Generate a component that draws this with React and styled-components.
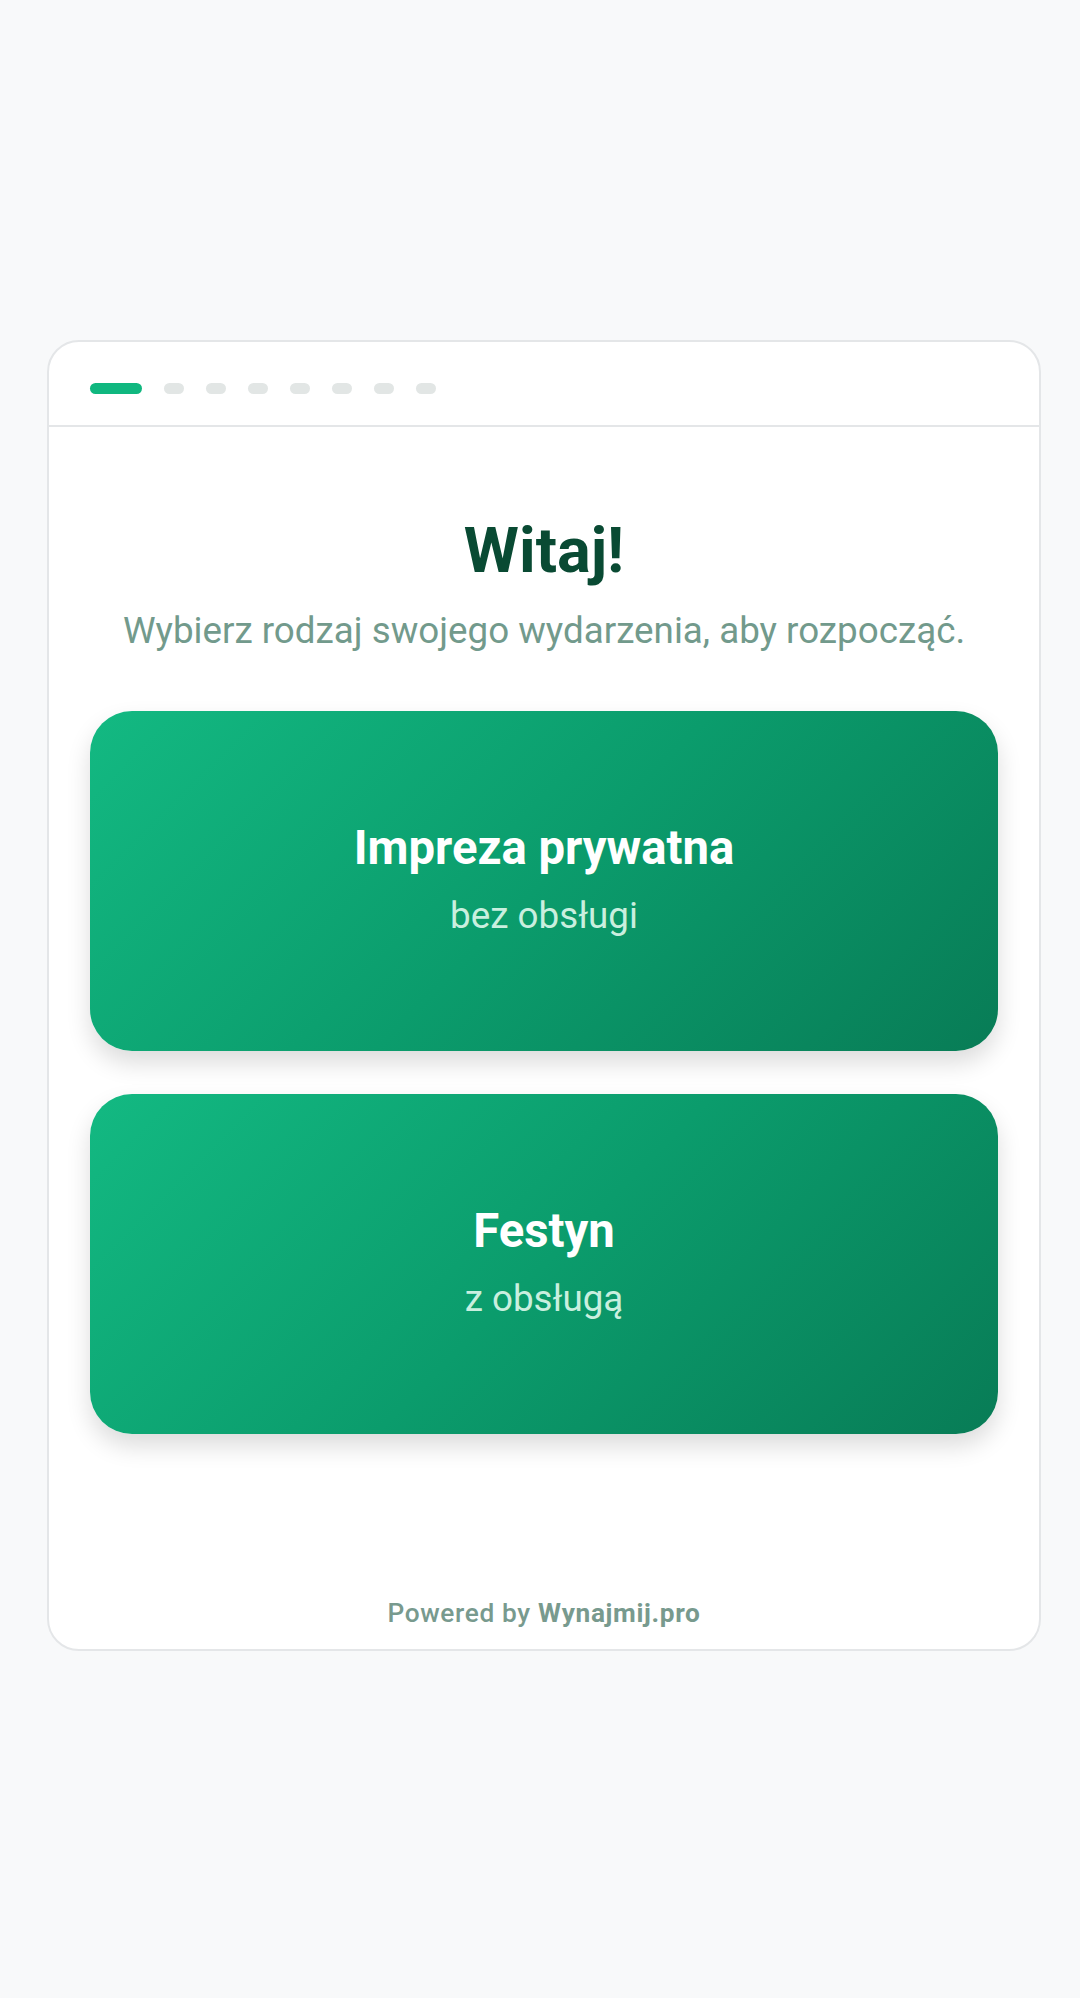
import React from 'react';
import styled, { createGlobalStyle } from 'styled-components';

const GlobalStyle = createGlobalStyle`
	html, body {
		margin: 0;
		padding: 0;
		background: #f8f9fa;
		font-family: Roboto, "Noto Sans", "Liberation Sans", sans-serif;
	}
	* {
		box-sizing: border-box;
	}
`;

const Page = styled.div`
	min-height: 100vh;
	display: flex;
	align-items: center;
	padding: 0 39px 7px 47px;
`;

const Card = styled.div`
	width: 994px;
	height: 1311px;
	display: flex;
	flex-direction: column;
	background: #ffffff;
	border: 2px solid #e4e6e8;
	border-radius: 32px;
	overflow: hidden;
`;

const Header = styled.div`
	display: flex;
	align-items: center;
	gap: 22px;
	padding: 41px 41px 31px;
	border-bottom: 2px solid #e4e6e8;
`;

const Step = styled.div`
	width: ${props => props.active ? '52px' : '20px'};
	height: 11px;
	border-radius: 6px;
	background: ${props => props.active ? '#10b77f' : '#e2e6e5'};
`;

const Body = styled.div`
	flex: 1;
	display: flex;
	flex-direction: column;
	padding: 86px 41px 0;
`;

const Title = styled.h1`
	margin: 0;
	font-size: 63px;
	line-height: 1.2;
	font-weight: 700;
	color: #094a33;
	text-align: center;
`;

const Subtitle = styled.p`
	margin: 16px 0 0;
	font-size: 36.75px;
	line-height: 1.4;
	color: #729a8c;
	text-align: center;
`;

const Options = styled.div`
	display: flex;
	flex-direction: column;
	gap: 43px;
	margin-top: 55px;
`;

const Option = styled.button`
	height: 340px;
	display: flex;
	flex-direction: column;
	align-items: center;
	justify-content: center;
	border: none;
	border-radius: 42px;
	background: linear-gradient(135deg, #13b982 0%, #0b9c6c 50%, #087c56 100%);
	box-shadow: 0 12px 24px rgba(0, 0, 0, 0.14);
	font-family: inherit;
	cursor: pointer;
`;

const OptionTitle = styled.span`
	font-size: 47.25px;
	line-height: 1.2;
	font-weight: 700;
	color: #ffffff;
`;

const OptionNote = styled.span`
	margin-top: 13px;
	font-size: 36.75px;
	line-height: 1.4;
	color: #c9efdf;
`;

const Footer = styled.div`
	margin-top: auto;
	padding-bottom: 19px;
	text-align: center;
	font-size: 26.25px;
	line-height: 34px;
	font-weight: 500;
	letter-spacing: 0.65px;
	color: #789a8e;

	b {
		font-weight: 700;
	}
`;

const steps = [true, false, false, false, false, false, false, false];

const options = [
	{ title: 'Impreza prywatna', note: 'bez obsługi' },
	{ title: 'Festyn', note: 'z obsługą' },
];

export default function App() {
	return (
		<Page>
			<GlobalStyle />
			<Card>
				<Header>
					{steps.map((active, i) => <Step key={i} active={active} />)}
				</Header>
				<Body>
					<Title>Witaj!</Title>
					<Subtitle>Wybierz rodzaj swojego wydarzenia, aby rozpocząć.</Subtitle>
					<Options>
						{options.map(o => (
							<Option key={o.title}>
								<OptionTitle>{o.title}</OptionTitle>
								<OptionNote>{o.note}</OptionNote>
							</Option>
						))}
					</Options>
					<Footer>Powered by <b>Wynajmij.pro</b></Footer>
				</Body>
			</Card>
		</Page>
	);
}
